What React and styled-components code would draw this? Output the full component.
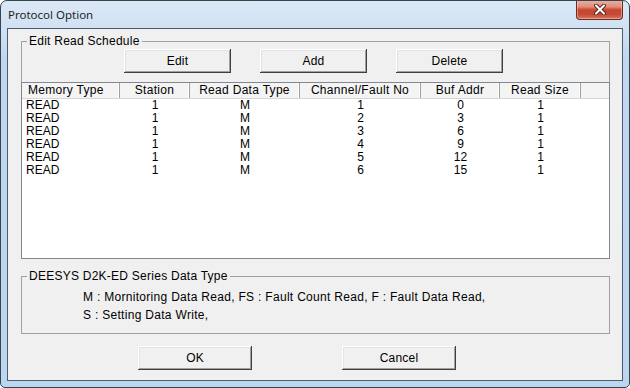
import React from "react";
import styled, { createGlobalStyle } from "styled-components";

const Global = createGlobalStyle`
  html, body { margin: 0; padding: 0; background: #ffffff; }
  * { box-sizing: border-box; }
`;

const Window = styled.div`
  width: 630px;
  height: 388px;
  border: 1px solid #39434f;
  border-radius: 7px 7px 5px 5px;
  background: linear-gradient(180deg, #dbe8f6 0px, #d0e1f3 28px, #bfd7ef 60px, #bcd6f0 100%);
  padding: 0 6px 6px 6px;
  display: flex;
  flex-direction: column;
  overflow: hidden;
`;

const TitleBar = styled.div`
  height: 27px;
  display: flex;
  align-items: flex-start;
  padding-left: 1px;
`;

const Title = styled.span`
  font-family: "Noto Sans", "Open Sans", sans-serif;
  font-size: 11.5px;
  line-height: 27px;
  color: #1e1e1e;
  flex: 1;
`;

const CloseButton = styled.div`
  width: 47px;
  height: 20px;
  margin-top: -1px;
  border: 1px solid #6a2c22;
  border-top: none;
  border-radius: 0 0 4px 4px;
  background: linear-gradient(180deg, #e9b2a3 0%, #df8f7c 35%, #c8452e 52%, #c24a35 75%, #d8765c 100%);
  box-shadow: inset 0 0 0 1px rgba(255, 220, 200, 0.45);
  display: flex;
  align-items: center;
  justify-content: center;
`;

const Client = styled.div`
  flex: 1;
  border: 1px solid #4b5d72;
  background: #f0f0f0;
  display: flex;
  flex-direction: column;
  padding: 5px 0 0 13px;
  font-family: "Liberation Sans", Arial, sans-serif;
  font-size: 12px;
  color: #000;
`;

const Group = styled.fieldset`
  margin: ${(p) => p.$mt || 0}px 0 0 0;
  padding: 0;
  width: 589px;
  min-inline-size: 0;
  border: 1px solid #a0a0a0;
  display: flex;
  flex-direction: column;
`;

const Legend = styled.legend`
  margin-left: 5px;
  padding: 0 2px;
  font-size: 12px;
  line-height: 14px;
  letter-spacing: 0.25px;
`;

const ButtonRow = styled.div`
  display: flex;
  gap: 29px;
  padding: 1px 0 0 ${(p) => p.$left}px;
`;

const Button = styled.button`
  width: ${(p) => p.$w || 107}px;
  height: 24px;
  margin: 0;
  padding: 0;
  border: none;
  background: #f0f0f0;
  font-family: "Liberation Sans", Arial, sans-serif;
  font-size: 12px;
  letter-spacing: 0.2px;
  color: #000;
  box-shadow: inset -1px -1px 0 #404040, inset 1px 1px 0 #ffffff,
    inset -2px -2px 0 #a0a0a0, inset 2px 2px 0 #e3e3e3;
`;

const ListView = styled.div`
  margin: 9px -1px -1px -1px;
  height: 177px;
  border: 1px solid #828790;
  background: #ffffff;
  display: flex;
  flex-direction: column;
`;

const cols = "98px 70px 110px 121px 79px 81px 1fr";

const HeaderRow = styled.div`
  display: grid;
  grid-template-columns: ${cols};
  height: 16px;
  background: #f4f4f4;
  border-bottom: 1px solid #d5d5d5;
`;

const HeaderCell = styled.div`
  line-height: 15px;
  text-align: ${(p) => (p.$left ? "left" : "center")};
  padding-left: ${(p) => (p.$left ? 6 : 0)}px;
  border-right: ${(p) => (p.$last ? "none" : "1px solid #a0a0a0")};
  box-shadow: ${(p) => (p.$last ? "none" : "inset -1px 0 0 #ffffff")};
  letter-spacing: 0.3px;
  white-space: nowrap;
  overflow: hidden;
`;

const Row = styled.div`
  display: grid;
  grid-template-columns: ${cols};
  height: 13px;
`;

const Cell = styled.div`
  line-height: 13px;
  text-align: ${(p) => (p.$left ? "left" : "center")};
  padding-left: ${(p) => (p.$left ? 4 : 0)}px;
  white-space: nowrap;
`;

const InfoBody = styled.div`
  padding: 5px 0 9px 61px;
  display: flex;
  flex-direction: column;
`;

const InfoLine = styled.div`
  line-height: 18px;
  letter-spacing: 0.3px;
  white-space: nowrap;
`;

const Footer = styled.div`
  display: flex;
  gap: 90px;
  padding-left: 117px;
  margin-top: 12px;
`;

const rows = [
  ["READ", 1, "M", 1, 0, 1],
  ["READ", 1, "M", 2, 3, 1],
  ["READ", 1, "M", 3, 6, 1],
  ["READ", 1, "M", 4, 9, 1],
  ["READ", 1, "M", 5, 12, 1],
  ["READ", 1, "M", 6, 15, 1],
];

const headers = ["Memory Type", "Station", "Read Data Type", "Channel/Fault No", "Buf Addr", "Read Size"];

export default function App() {
  return (
    <>
      <Global />
      <Window>
        <TitleBar>
          <Title>Protocol Option</Title>
          <CloseButton>
            <svg width="12" height="11" viewBox="0 0 12 11">
              <path d="M2 1.5 L10 9.5 M10 1.5 L2 9.5" stroke="#5a2a22" strokeWidth="4" strokeLinecap="round" />
              <path d="M2 1.5 L10 9.5 M10 1.5 L2 9.5" stroke="#ffffff" strokeWidth="2" strokeLinecap="round" />
            </svg>
          </CloseButton>
        </TitleBar>
        <Client>
          <Group>
            <Legend>Edit Read Schedule</Legend>
            <ButtonRow $left={102}>
              <Button>Edit</Button>
              <Button>Add</Button>
              <Button>Delete</Button>
            </ButtonRow>
            <ListView>
              <HeaderRow>
                {headers.map((h, i) => (
                  <HeaderCell key={h} $left={i === 0}>{h}</HeaderCell>
                ))}
                <HeaderCell $last />
              </HeaderRow>
              {rows.map((r, i) => (
                <Row key={i}>
                  {r.map((v, j) => (
                    <Cell key={j} $left={j === 0}>{v}</Cell>
                  ))}
                </Row>
              ))}
            </ListView>
          </Group>
          <Group $mt={10}>
            <Legend>DEESYS D2K-ED Series Data Type</Legend>
            <InfoBody>
              <InfoLine>M : Mornitoring Data Read, FS : Fault Count Read, F : Fault Data Read,</InfoLine>
              <InfoLine>S : Setting Data Write,</InfoLine>
            </InfoBody>
          </Group>
          <Footer>
            <Button $w={114}>OK</Button>
            <Button $w={114}>Cancel</Button>
          </Footer>
        </Client>
      </Window>
    </>
  );
}
